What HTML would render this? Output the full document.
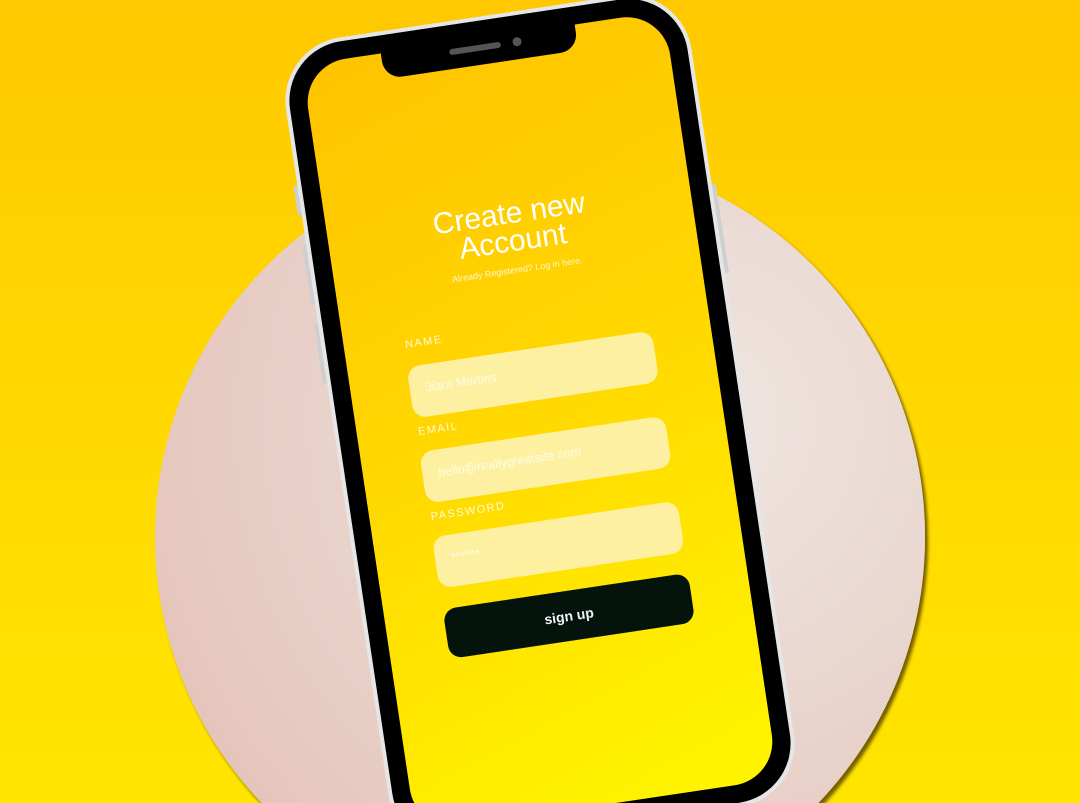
<!DOCTYPE html>
<html><head><meta charset="utf-8"><style>
html,body{margin:0;padding:0;width:1080px;height:803px;overflow:hidden}
body{position:relative;background:linear-gradient(180deg,#ffc800 0%,#ffd800 50%,#ffe500 100%);font-family:"Liberation Sans",sans-serif}
.circle{position:absolute;left:155px;top:152px;width:770px;height:770px;border-radius:50%;background:radial-gradient(circle at 70% 35%,#efe6e2 0%,#e9d6cf 40%,#e6c7bd 75%,#deb5aa 100%);box-shadow:3px 4px 3px rgba(60,40,0,.7)}
.phone{position:absolute;left:335px;top:12px;width:410px;height:820px;transform:rotate(-8.5deg);transform-origin:205px 410px}
.frame{position:absolute;inset:0;border-radius:64px;background:#000;border:4px solid #e6e6e6;box-sizing:border-box}
.btn{position:absolute;background:#cfcfcf;width:6px;border-radius:2px}
.screen{position:absolute;left:22px;top:22px;right:22px;bottom:22px;border-radius:44px;background:linear-gradient(160deg,#ffc300 0%,#ffd400 40%,#ffe800 75%,#fff500 100%);overflow:hidden}
.notch{position:absolute;left:102px;top:18px;width:196px;height:30px;background:#000;border-radius:0 0 18px 18px}
.spk{position:absolute;left:170px;top:28px;width:52px;height:6px;border-radius:3px;background:#555}
.cam{position:absolute;left:234px;top:26px;width:9px;height:9px;border-radius:50%;background:#555}
.t{position:absolute;left:0;width:410px;text-align:center;color:#fff}
.lbl{position:absolute;left:83px;color:#fff8d8;font-size:11px;letter-spacing:1.5px}
.in{position:absolute;left:81px;width:248px;height:52px;border-radius:13px;background:#fdf0a0;box-sizing:border-box;padding:16px 0 0 16px;color:#fffbe8;font-size:12.5px}
.go{position:absolute;left:81px;width:248px;height:50px;border-radius:13px;background:#04140c;color:#f2f2f2;font-weight:bold;font-size:14px;text-align:center;line-height:50px}
</style></head><body>
<div class="circle"></div>
<div class="phone">
<div class="btn" style="left:-4px;top:140px;height:30px"></div>
<div class="btn" style="left:-4px;top:200px;height:60px"></div>
<div class="btn" style="left:-4px;top:280px;height:60px"></div>
<div class="btn" style="right:-4px;top:200px;height:90px"></div>
<div class="frame"></div>
<div class="screen"></div>
<div class="notch"></div><div class="spk"></div><div class="cam"></div>
<div class="t" style="top:186px;font-size:30px;line-height:28px">Create new<br>Account</div>
<div class="t" style="top:251px;font-size:9px;color:#fff6d0">Already Registered? Log in here.</div>
<div class="lbl" style="top:308px">NAME</div>
<div class="in" style="top:336px">Jiara Martins</div>
<div class="lbl" style="top:396px">EMAIL</div>
<div class="in" style="top:422px">hello@reallygreatsite.com</div>
<div class="lbl" style="top:482px">PASSWORD</div>
<div class="in" style="top:508px">******</div>
<div class="go" style="top:581px">sign up</div>
</div>
</body></html>
